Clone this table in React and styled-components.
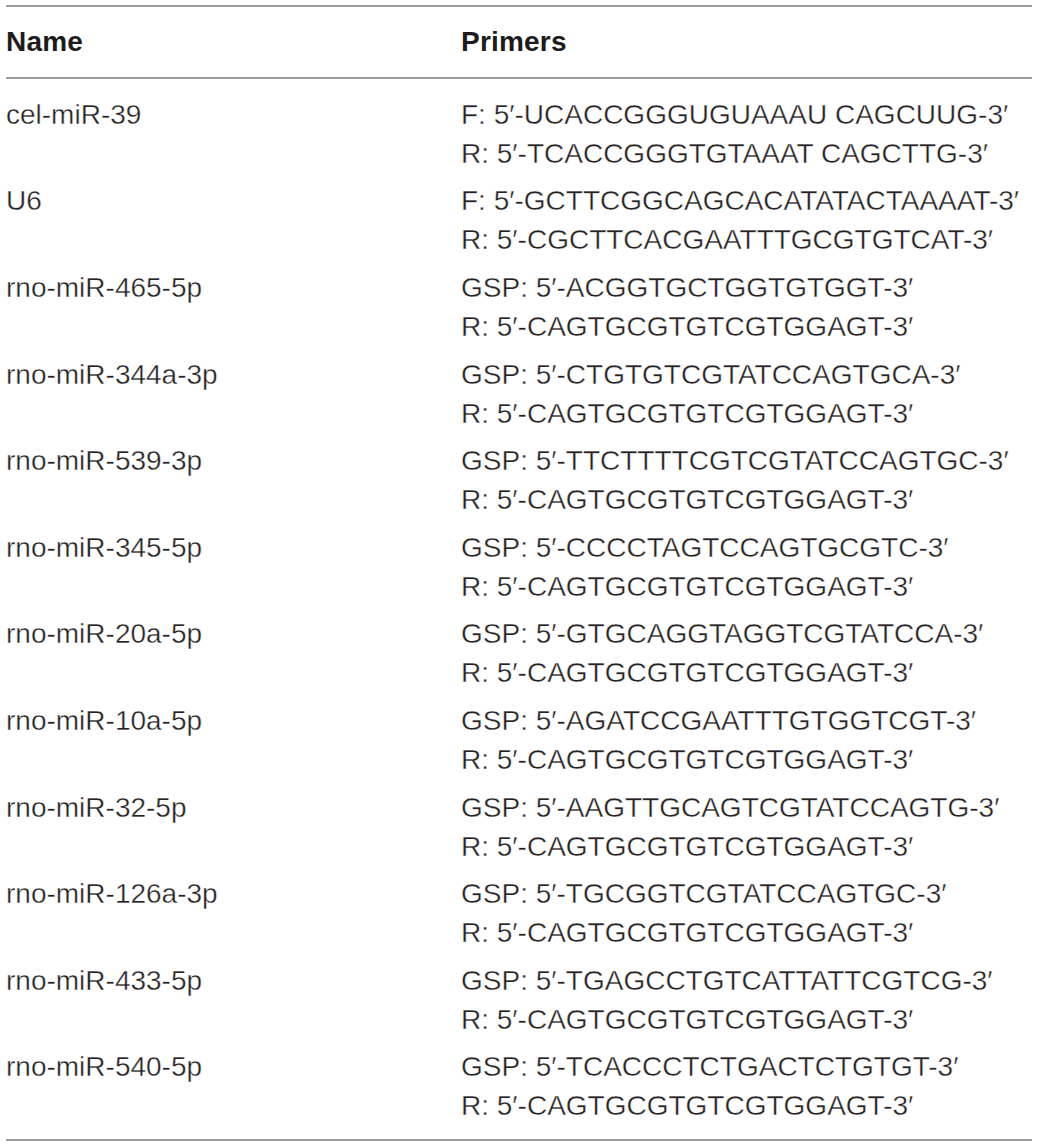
import styled, { createGlobalStyle } from 'styled-components';

const GlobalStyle = createGlobalStyle`
    body {
        margin: 0;
        background: #ffffff;
        font-family: "Liberation Sans", Arial, Helvetica, sans-serif;
        color: #231f20;
    }
`

const Table = styled.div`
    width: 1026px;
    margin: 5px 0 0 6px;
    border-top: 2px solid #9d9d9d;
    border-bottom: 2px solid #9d9d9d;
`

const Row = styled.div`
    display: grid;
    grid-template-columns: 455px 1fr;
`

const HeadRow = styled(Row)`
    height: 70px;
    align-items: center;
    border-bottom: 2px solid #9d9d9d;
`

const HeadCell = styled.div`
    font-size: 28px;
    font-weight: 700;
    line-height: 70px;
    color: #1e1b1c;
    letter-spacing: 0.2px;
`

const Body = styled.div`
    padding: 11.5px 0 9.3px;
`

const DataRow = styled(Row)`
    padding: 4.3px 0;
`

const Cell = styled.div`
    font-size: 28px;
    font-weight: 400;
    line-height: 39px;
    color: #262223;
    white-space: nowrap;
    -webkit-text-stroke: 0.35px #ffffff;
`

const Line = styled.div``

const rows = [
    ['cel-miR-39', 'F: 5′-UCACCGGGUGUAAAU CAGCUUG-3′', 'R: 5′-TCACCGGGTGTAAAT CAGCTTG-3′'],
    ['U6', 'F: 5′-GCTTCGGCAGCACATATACTAAAAT-3′', 'R: 5′-CGCTTCACGAATTTGCGTGTCAT-3′'],
    ['rno-miR-465-5p', 'GSP: 5′-ACGGTGCTGGTGTGGT-3′', 'R: 5′-CAGTGCGTGTCGTGGAGT-3′'],
    ['rno-miR-344a-3p', 'GSP: 5′-CTGTGTCGTATCCAGTGCA-3′', 'R: 5′-CAGTGCGTGTCGTGGAGT-3′'],
    ['rno-miR-539-3p', 'GSP: 5′-TTCTTTTCGTCGTATCCAGTGC-3′', 'R: 5′-CAGTGCGTGTCGTGGAGT-3′'],
    ['rno-miR-345-5p', 'GSP: 5′-CCCCTAGTCCAGTGCGTC-3′', 'R: 5′-CAGTGCGTGTCGTGGAGT-3′'],
    ['rno-miR-20a-5p', 'GSP: 5′-GTGCAGGTAGGTCGTATCCA-3′', 'R: 5′-CAGTGCGTGTCGTGGAGT-3′'],
    ['rno-miR-10a-5p', 'GSP: 5′-AGATCCGAATTTGTGGTCGT-3′', 'R: 5′-CAGTGCGTGTCGTGGAGT-3′'],
    ['rno-miR-32-5p', 'GSP: 5′-AAGTTGCAGTCGTATCCAGTG-3′', 'R: 5′-CAGTGCGTGTCGTGGAGT-3′'],
    ['rno-miR-126a-3p', 'GSP: 5′-TGCGGTCGTATCCAGTGC-3′', 'R: 5′-CAGTGCGTGTCGTGGAGT-3′'],
    ['rno-miR-433-5p', 'GSP: 5′-TGAGCCTGTCATTATTCGTCG-3′', 'R: 5′-CAGTGCGTGTCGTGGAGT-3′'],
    ['rno-miR-540-5p', 'GSP: 5′-TCACCCTCTGACTCTGTGT-3′', 'R: 5′-CAGTGCGTGTCGTGGAGT-3′'],
]

const App = () => {
  return (
    <>
      <GlobalStyle />
      <Table>
        <HeadRow>
          <HeadCell>Name</HeadCell>
          <HeadCell>Primers</HeadCell>
        </HeadRow>
        <Body>
          {rows.map(([name, first, second]) => (
            <DataRow key={name}>
              <Cell>{name}</Cell>
              <Cell>
                <Line>{first}</Line>
                <Line>{second}</Line>
              </Cell>
            </DataRow>
          ))}
        </Body>
      </Table>
    </>
  )
}

export default App
